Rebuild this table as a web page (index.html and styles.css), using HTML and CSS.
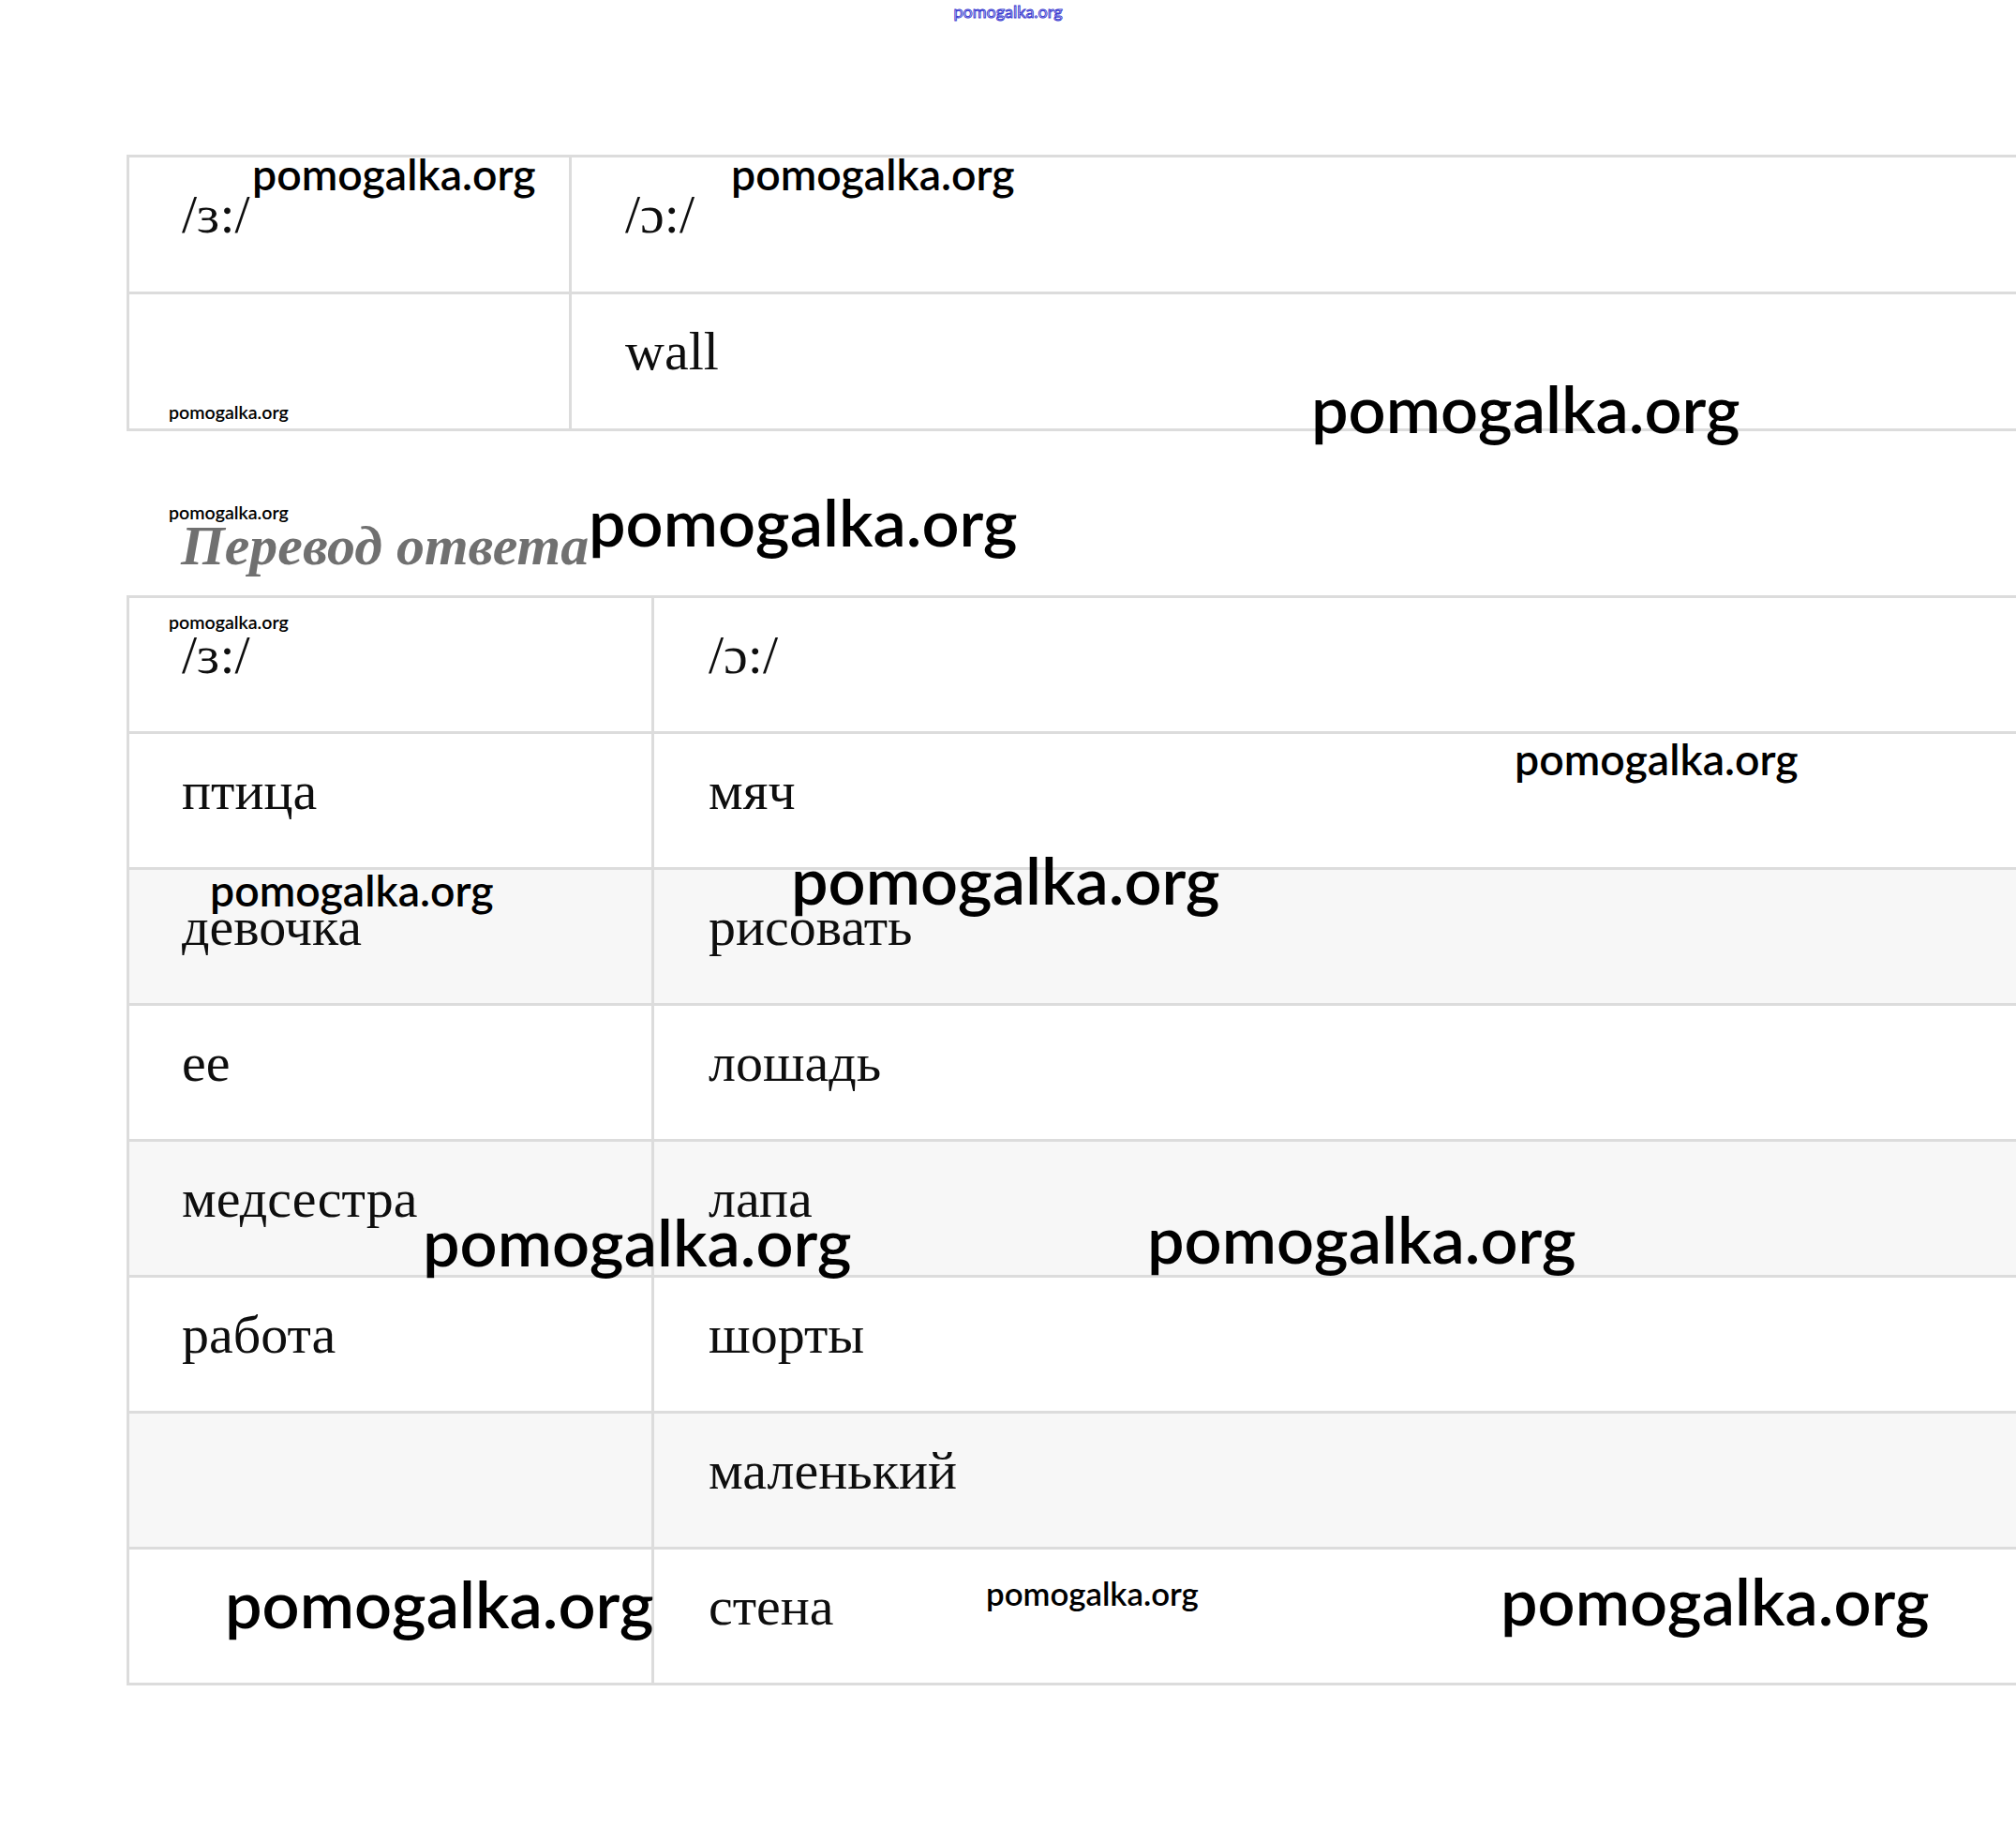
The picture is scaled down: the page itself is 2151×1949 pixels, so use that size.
FILE: index.html
```html
<!DOCTYPE html>
<html lang="ru">
<head>
<meta charset="utf-8">
<title>Перевод ответа</title>
<link rel="stylesheet" href="styles.css">
</head>
<body>
<div class="page">
  <div class="topmark">pomogalka.org</div>

  <div class="grid grid-1">
    <div class="cell">/ɜ:/</div>
    <div class="cell">/ɔ:/</div>
    <div class="cell"></div>
    <div class="cell">wall</div>
  </div>

  <h2 class="heading">Перевод ответа</h2>

  <div class="grid grid-2">
    <div class="cell">/ɜ:/</div>
    <div class="cell">/ɔ:/</div>
    <div class="cell">птица</div>
    <div class="cell">мяч</div>
    <div class="cell shade">девочка</div>
    <div class="cell shade">рисовать</div>
    <div class="cell">ее</div>
    <div class="cell">лошадь</div>
    <div class="cell shade">медсестра</div>
    <div class="cell shade">лапа</div>
    <div class="cell">работа</div>
    <div class="cell">шорты</div>
    <div class="cell shade"></div>
    <div class="cell shade">маленький</div>
    <div class="cell"></div>
    <div class="cell">стена</div>
  </div>

  <span class="wm md wm1">pomogalka.org</span>
  <span class="wm md wm2">pomogalka.org</span>
  <span class="wm sm wm3">pomogalka.org</span>
  <span class="wm lg wm4">pomogalka.org</span>
  <span class="wm sm wm5">pomogalka.org</span>
  <span class="wm lg wm6">pomogalka.org</span>
  <span class="wm sm wm7">pomogalka.org</span>
  <span class="wm md wm8">pomogalka.org</span>
  <span class="wm md wm9">pomogalka.org</span>
  <span class="wm lg wm10">pomogalka.org</span>
  <span class="wm lg wm11">pomogalka.org</span>
  <span class="wm lg wm12">pomogalka.org</span>
  <span class="wm lg wm13">pomogalka.org</span>
  <span class="wm xs wm14">pomogalka.org</span>
  <span class="wm lg wm15">pomogalka.org</span>
</div>
</body>
</html>
```

FILE: styles.css
```css
html, body {
  margin: 0;
  padding: 0;
  background: #ffffff;
}

body {
  overflow: hidden;
}

.page {
  position: relative;
  width: 2151px;
  height: 1949px;
  padding-left: 135px;
  box-sizing: border-box;
  overflow: hidden;
  font-family: "Liberation Serif", "Times New Roman", serif;
  color: #0e0e0e;
}

.topmark {
  margin-left: -135px;
  height: 24px;
  line-height: 24px;
  text-align: center;
  font-family: Lato, "Liberation Sans", sans-serif;
  font-size: 18px;
  color: #ffffff;
  -webkit-text-stroke: 1px #3a3ad0;
}

.grid {
  display: grid;
  border-top: 3px solid #dcdcdc;
  border-left: 3px solid #dcdcdc;
}

.grid-1 {
  margin-top: 141px;
  grid-template-columns: 472px 1fr;
  grid-auto-rows: 146px;
}

.grid-2 {
  grid-template-columns: 560px 1fr;
  grid-auto-rows: 145px;
}

.cell {
  box-sizing: border-box;
  border-bottom: 3px solid #dcdcdc;
  border-right: 3px solid #dcdcdc;
  padding: 26px 0 0 56px;
  font-size: 58px;
  line-height: 70px;
  white-space: nowrap;
}

.cell:nth-child(2n) {
  border-right: none;
}

.grid-1 .cell:nth-child(2n) {
  padding-left: 57px;
}

.grid-2 .cell:nth-child(2n) {
  padding-left: 58px;
}

.cell.shade {
  background: #f7f7f7;
}

.heading {
  margin: 87px 0 18px 0;
  padding-left: 58px;
  font-family: "Liberation Serif", "Times New Roman", serif;
  font-style: italic;
  font-weight: 700;
  font-size: 60px;
  line-height: 70px;
  color: #707070;
}

.wm {
  position: absolute;
  font-family: Lato, "Liberation Sans", sans-serif;
  font-weight: 600;
  line-height: 1;
  color: #000000;
  white-space: nowrap;
}

.wm.sm { font-size: 19.6px; }
.wm.xs { font-size: 34.8px; }
.wm.md { font-size: 46.4px; }
.wm.lg { font-size: 70.2px; }

.wm1 { left: 269px; top: 162px; }
.wm2 { left: 780px; top: 162px; }
.wm3 { left: 180px; top: 430px; }
.wm4 { left: 1399px; top: 400px; }
.wm5 { left: 180px; top: 537px; }
.wm6 { left: 628px; top: 521px; }
.wm7 { left: 180px; top: 654px; }
.wm8 { left: 1616px; top: 786px; }
.wm9 { left: 224px; top: 926px; }
.wm10 { left: 844px; top: 903px; }
.wm11 { left: 451px; top: 1289px; }
.wm12 { left: 1224px; top: 1286px; }
.wm13 { left: 240px; top: 1675px; }
.wm14 { left: 1052px; top: 1683px; }
.wm15 { left: 1601px; top: 1672px; }
```
